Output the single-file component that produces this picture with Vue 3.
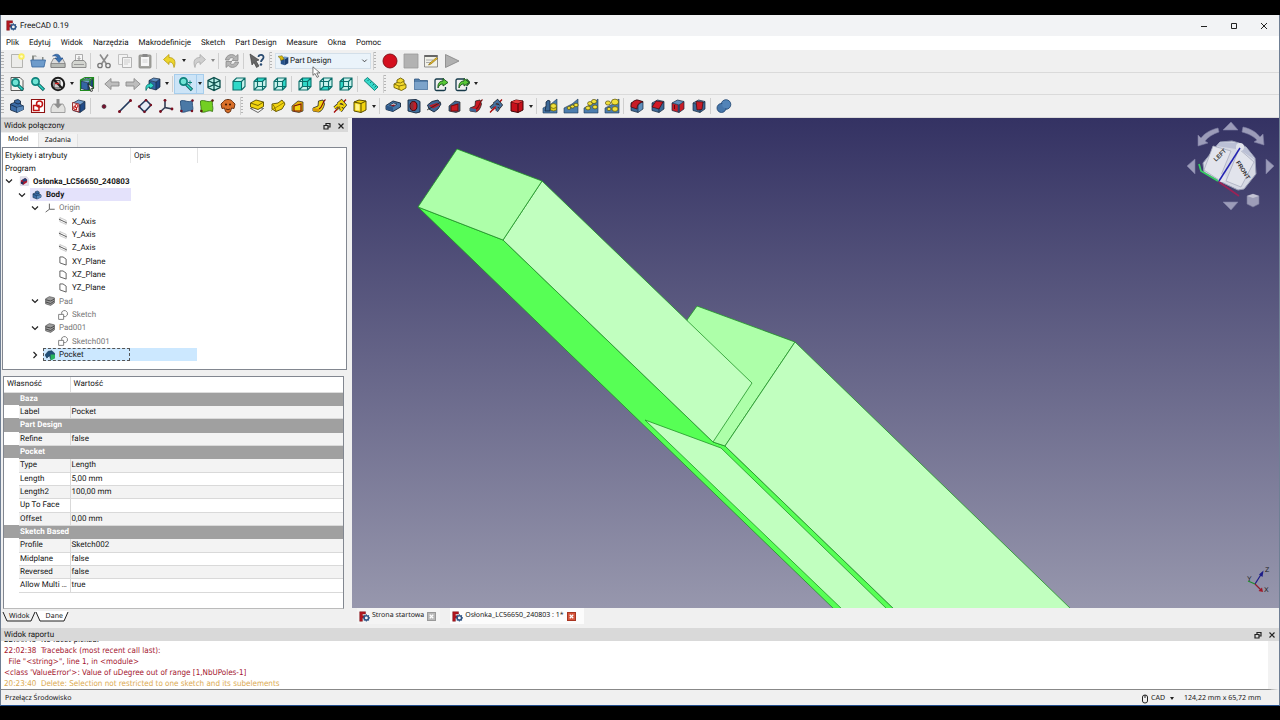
<script setup>
import { ref } from 'vue'

const svgBox = (front, top, side) =>
  `<path d="M2 5 L9 7 V14.5 L2 12.5Z" fill="${front}"/><path d="M2 5 L7.5 2 L14 3.5 L9 7Z" fill="${top}"/><path d="M9 7 L14 3.5 V11 L9 14.5Z" fill="${side}"/><path d="M2 5 L7.5 2 L14 3.5 V11 L9 14.5 L2 12.5Z M2 5 L9 7 L14 3.5 M9 7 V14.5" fill="none" stroke="#14263c" stroke-width=".7"/>`
const wire = (fill, inner = true) =>
  `<path d="M2 5.5 L5.5 2 H14 V10.5 L10.5 14 H2Z" fill="#c9f3ee"/><path d="${fill}" fill="#2fd8c8"/><path d="M2 5.5 H10.5 V14 H2Z M2 5.5 L5.5 2 H14 V10.5 L10.5 14 M10.5 5.5 L14 2${inner ? ' M5.5 2 V10.5 H14 M5.5 10.5 L2 14' : ''}" fill="none" stroke="#0c6f6b" stroke-width="1.1"/>`
const blueBox = svgBox('#3465a4', '#729fcf', '#204a87')
const pattern = (shapes) =>
  `<path d="M1 15 V10 L9 6 L15 1 V15Z" fill="#4c7dae" stroke="#1c3553" stroke-width=".6"/>${shapes}`
const knob = (x, y, r = 2.5) =>
  `<ellipse cx="${x}" cy="${y}" rx="${r}" ry="${r * 0.8}" fill="#f1e03a" stroke="#57500a" stroke-width=".7"/>`
const loft = (c, d) =>
  `<path d="M2 8 L8 3 L13 4 V13 L9 14.5 L2 13Z" fill="${d}" stroke="#222" stroke-width=".7"/><path d="M4 8 L11 6 V13 H4Z" fill="${c}" stroke="#7a0c0c" stroke-width="1.1"/>`
const pipe = (c, d) =>
  `<path d="M2 10 L7 8 L7.500 3 L12 2 L13.500 6 C12.500 10 11 13 8 14 L2 13Z" fill="${c}" stroke="#222" stroke-width=".8"/><path d="M2 10 L8 11 V14 L2 13Z" fill="${d}"/><path d="M8 11 C12 9 11 4 14.500 1.500" fill="none" stroke="#7a0c0c" stroke-width="1.1"/>`
const helix = (c, d) =>
  `<path d="M2 14.500 L14 1.500" stroke="#a40000" stroke-width="1.200"/><path d="M2.500 10 L6 7 L10 11 L8.500 13 M6 6 L9.500 3 L13 7 L11 9.500 M6 7 L11 8" fill="none" stroke="#222" stroke-width="3.200"/><path d="M2.500 10 L6 7 L10 11 L8.500 13 M6 6 L9.500 3 L13 7 L11 9.500 M6 7 L11 8" fill="none" stroke="${c}" stroke-width="2"/><path d="M5 12 L8 8.500" stroke="${d}" stroke-width="1.300"/>`
const exportIcon = (x) =>
  `<path d="M11 3 H3.5 Q2 3 2 4.500 V13 Q2 14.500 3.500 14.500 H11 Q12.500 14.500 12.500 13 V11" fill="none" stroke="#163a4a" stroke-width="1.3"/><path d="M5 12 C4.500 7 7 5 10 5 V2.500 L15 6.500 L10 10 V8 C7.500 8 6 9 5 12Z" fill="#58c837" stroke="#17551a" stroke-width=".9"/>${x}`
const magnifier = (x, y) =>
  `<circle cx="${x}" cy="${y}" r="3.6" fill="#6fe3d4" stroke="#0e837c" stroke-width="1.700"/><path d="M${x + 2.8} ${y + 2.8} L14 14" stroke="#0b5f5c" stroke-width="3.2"/><path d="M${x + 3.2} ${y + 3.2} L13.500 13.500" stroke="#2fd8c8" stroke-width="1.500"/>`

const icons = {
  new: '<path d="M2.500 1.500 H13.500 V14.500 H2.500Z" fill="#ececea" stroke="#b4b4b0"/><circle cx="12.500" cy="3.500" r="3.200" fill="#f9ee5e"/><circle cx="12.500" cy="3.500" r="1.300" fill="#fffbd0"/>',
  open: '<path d="M2 13 V2.500 H6 L7 4 H13.500 V13Z" fill="#8a8d88"/><path d="M4 3.500 H12 V7 H4Z" fill="#e8e8e8"/><path d="M.8 7 H15.500 L14 14 H2Z" fill="#6d9bcb" stroke="#35659c" stroke-width=".8"/>',
  save: '<path d="M3.500 5.500 H12.500 L15 10 V14.500 H1 V10Z" fill="#dcdcdc" stroke="#777" stroke-width=".8"/><path d="M1 10.500 H15 V14.500 H1Z" fill="#b7bab5" stroke="#777" stroke-width=".7"/><path d="M2.500 3 C6 0 10 1 10.500 5 H13 L9 9.500 L5 5 H7.500 C7 3 5 2.500 2.500 3Z" fill="#3b73b2" stroke="#204a87" stroke-width=".6"/>',
  print: '<path d="M4.500 1.500 H11.500 V8 H4.500Z" fill="#f6f6f6" stroke="#999" stroke-width=".8"/><path d="M8 3 V6.500 M6.500 5 L8 6.500 L9.500 5" fill="none" stroke="#999"/><path d="M3 7.500 H13 L15 10 V14.500 H1 V10Z" fill="#d3d5d0" stroke="#858585" stroke-width=".9"/><path d="M3 11.500 H13" stroke="#999"/>',
  cut: '<path d="M4 1.500 L10.500 11 M12 1.500 L5.500 11" stroke="#8b8b8b" stroke-width="1.600"/><circle cx="4" cy="12.500" r="2.200" fill="none" stroke="#777" stroke-width="1.300"/><circle cx="12" cy="12.500" r="2.200" fill="none" stroke="#777" stroke-width="1.300"/>',
  copy: '<path d="M1.500 1.500 H10.500 V11.500 H1.500Z" fill="#f3f3f3" stroke="#c2c2c2"/><path d="M5.500 4.500 H14.500 V14.500 H5.500Z" fill="#f4f4f4" stroke="#b3b3b3"/><path d="M7 7 H13 M7 9 H13 M7 11 H11" stroke="#c4c4c4" stroke-width=".8"/>',
  paste: '<rect x="2" y="2" width="12" height="13" rx="1" fill="#a4a4a0" stroke="#8a8a86" stroke-width=".8"/><path d="M4 4 H12 V13 H4Z" fill="#f7f7f7"/><path d="M5.500 1 H10.500 V4 H5.500Z" fill="#888"/><path d="M5.500 7 H10.500 M5.500 9 H10.500" stroke="#ccc" stroke-width=".8"/>',
  undo: '<path d="M1.500 6.500 L7 1.500 V4.500 C12 4.500 14.500 8 12 14.500 C11.500 10.500 10 9 7 9 V11.500Z" fill="#ecd52c" stroke="#b79b10" stroke-width=".8"/>',
  redo: '<path d="M14.500 6.500 L9 1.500 V4.500 C4 4.500 1.500 8 4 14.500 C4.500 10.500 6 9 9 9 V11.500Z" fill="#cfcfcf" stroke="#a9a9a9" stroke-width=".8"/>',
  refresh: '<path d="M1.500 7 C2 1.500 9 0 11.800 3.500 L14 1.500 V7.500 H8 L9.800 5.700 C8 4 5.500 4.500 5 7Z M14.500 9 C14 14.500 7 16 4.200 12.500 L2 14.500 V8.500 H8 L6.200 10.300 C8 12 10.500 11.500 11 9Z" fill="#b4b4b4" stroke="#888" stroke-width=".8"/>',
  whats: '<path d="M1 1 L10 7 L7 8 L10 13 L7.500 14.500 L5 9.500 L3 12Z" fill="#666" stroke="#333" stroke-width=".6"/><path d="M9.500 4 C9.500 1 15 1 14.500 4.500 C14.500 6.500 12 6.500 12 9" fill="none" stroke="#284a70" stroke-width="1.800"/><circle cx="12" cy="11.500" r="1.200" fill="#284a70"/>',
  record: '<circle cx="8" cy="8" r="7" fill="#d40f1e" stroke="#7c0a12" stroke-width=".9"/>',
  stop: '<path d="M1 1 H15 V15 H1Z" fill="#b2b2b2" stroke="#9a9a9a" stroke-width=".8"/>',
  macro: '<path d="M1.500 2.500 H14.500 V14 H1.500Z" fill="#f1f1e8" stroke="#777" stroke-width=".8"/><path d="M1.500 2 H14.500 V4 H1.500Z" fill="#666"/><path d="M3 7 H10 M3 9.500 H9" stroke="#9a9a9a" stroke-width=".8"/><path d="M14.500 5.500 L8 11 L5.500 12 L7 10 L13.500 4.500Z" fill="#efc32c" stroke="#7a5b00" stroke-width=".6"/>',
  play: '<path d="M1.500 1.500 L15 8 L1.500 14.500Z" fill="#b0b0b0" stroke="#8b8b8b" stroke-width=".9"/>',
  fitAll: '<path d="M2 1.500 H11 L14 4.500 V14.500 H2Z" fill="#f4f4f0" stroke="#333" stroke-width=".8"/>' + magnifier(6.5, 6.5),
  fitSel: magnifier(5.5, 5.5),
  drawStyle: '<path d="M4 4.500 H10 V12 H4Z" fill="#cfcfcf" stroke="#444"/><circle cx="8" cy="8" r="6.200" fill="none" stroke="#1c1c1c" stroke-width="2"/><path d="M4 4 L12 12" stroke="#1c1c1c" stroke-width="2"/><path d="M5 7.500 H9" stroke="#cc1f1f" stroke-width="1.500"/>',
  bbox: blueBox + '<path d="M1.500 4 L6 1.500 H14.500 V12 L11 14.500 H1.500Z M1.500 4 H11 V14.500 M11 4 L14.500 1.500" fill="none" stroke="#1f8a1f" stroke-width="1.200"/><path d="M9 8 L15 12 L12.500 12.300 L13.500 15 L11.800 15.500 L11 13Z" fill="#fff" stroke="#111" stroke-width=".7"/>',
  back: '<path d="M.8 8 L7 2.500 V6 H15 V10 H7 V13.500Z" fill="#bdbdbd" stroke="#8b8b8b" stroke-width=".9"/>',
  forward: '<path d="M15.200 8 L9 2.500 V6 H1 V10 H9 V13.500Z" fill="#bdbdbd" stroke="#8b8b8b" stroke-width=".9"/>',
  goLink: '<path d="M4 4.500 L11 6 V14 L4 12Z" fill="#3465a4"/><path d="M4 4.500 L8.500 2 L15 3 L11 6Z" fill="#5d8cc0"/><path d="M11 6 L15 3 V11 L11 14Z" fill="#204a87"/><path d="M4 4.500 L8.500 2 L15 3 V11 L11 14 L4 12Z M4 4.500 L11 6 L15 3 M11 6 V14" fill="none" stroke="#14263c" stroke-width=".7"/><path d="M1 14.500 C0 9 3 8 5 8 V6 L9 9.500 L5 13 V11 C3 11 2 12 1 14.500Z" fill="#2fd8c8" stroke="#0b5f5c" stroke-width=".7"/>',
  zoomTool: magnifier(5.5, 5.5) + '<path d="M12 4.500 V8.500 M10 6.500 H14" stroke="#0e837c" stroke-width="1"/>',
  iso: '<path d="M8 1.500 L14 4.500 V11.500 L8 14.500 L2 11.500 V4.500Z" fill="#b9efe8"/><path d="M8 1.500 L14 4.500 V11.500 L8 14.500 L2 11.500 V4.500Z M2 4.500 L8 7.500 L14 4.500 M8 7.500 V14.500 M8 1.500 V8 M2 11.500 L8 8.500 L14 11.500" fill="none" stroke="#0b4f4c" stroke-width="1.300"/>',
  front: wire('M2 5.5 H10.5 V14 H2Z', false),
  top: wire('M2 5.5 L5.5 2 H14 L10.500 5.500Z'),
  right: wire('M10.5 5.5 L14 2 V10.500 L10.500 14Z'),
  rear: wire('M5.5 2 H14 V10.500 H5.500Z'),
  bottom: wire('M2 14 L5.500 10.500 H14 L10.500 14Z'),
  left: wire('M2 5.500 L5.500 2 V10.500 L2 14Z'),
  measure: '<path d="M1 4.500 L4.500 1.500 L15 11 L11.500 14.500Z" fill="#35d9ca" stroke="#0b7a74" stroke-width=".9"/><path d="M6 3.500 L4.500 5 M8.500 5.500 L7 7 M11 8 L9.500 9.500 M13 10 L11.500 11.500" stroke="#0b5f5c" stroke-width=".8"/>',
  part: '<path d="M2 8 L5 6.500 V4 L8.500 2 L12 4 V7 L14 8.500 V12 L9.500 14.500 L2 11.500Z" fill="#f3d92c" stroke="#6b5c04" stroke-width=".9"/><path d="M2 8 L7 10 L14 8.500 M7 10 V13.500 M5 6.500 L8.500 7 L12 5" fill="none" stroke="#7d6c07" stroke-width=".9"/>',
  group: '<path d="M1.500 3 H6 L7 4.500 H14.500 V13.500 H1.500Z" fill="#5580ac" stroke="#305780" stroke-width=".8"/><path d="M1.500 6 H14.500 V13.500 H1.500Z" fill="#7ca3ca"/>',
  link: exportIcon(''),
  links: exportIcon('<path d="M12.500 3 L16 6.500 L12.500 10" fill="none" stroke="#17551a" stroke-width="1.200"/>'),
  body: '<path d="M1.500 6 L5.500 4.500 V2.500 L9 1.500 L11.500 3 V6.500 L14.500 8 V11.500 L8 14.500 L1.500 12Z" fill="#3c6ca6" stroke="#14263c" stroke-width=".8"/><path d="M1.500 6.500 L8 9.500 L14.500 8 M8 9.500 V14.500 M5.500 4.500 L9 6 L11.500 5" fill="none" stroke="#162c4a" stroke-width=".9"/><path d="M8 9.500 L14.500 8 V11.500 L8 14.500Z" fill="#5886b8"/>',
  sketch: '<path d="M1.500 1.500 H14.500 V14.500 H1.500Z" fill="#fff" stroke="#8e1111" stroke-width="1.100"/><path d="M3.500 7.500 H9 V12.500 H3.500Z" fill="none" stroke="#c11515" stroke-width="1.500"/><circle cx="9.500" cy="6" r="3" fill="none" stroke="#c11515" stroke-width="1.500"/>',
  editSketch: '<path d="M3 6 H13 L15 10 V14.500 H1 V10Z" fill="#e2e2e0" stroke="#989898" stroke-width=".9"/><path d="M6.500 1 H9.500 V6 H12 L8 10.500 L4 6 H6.500Z" fill="#8e8e8e"/>',
  mapSketch: blueBox + '<path d="M1.500 4.500 L8 6 V14 L1.500 12Z" fill="#f7e5e5" stroke="#8e1111" stroke-width=".8"/><circle cx="5.500" cy="8" r="1.500" fill="none" stroke="#c11515"/><path d="M2.800 8.500 L5.500 9.500 V12 L2.800 11Z" fill="none" stroke="#c11515"/>',
  point: '<circle cx="8" cy="8.500" r="2" fill="#7a1030" stroke="#333" stroke-width=".6"/>',
  line: '<path d="M2 14 L14 2" stroke="#223a5c" stroke-width="1.700"/><circle cx="2.500" cy="13.500" r="1.500" fill="#7a1020"/><circle cx="13.500" cy="2.500" r="1.500" fill="#7a1020"/>',
  plane: '<path d="M9 2 L14 7 L7.500 14 L2 8.500Z" fill="#e4edf6" stroke="#223a5c" stroke-width="1.600"/><circle cx="9" cy="2.200" r="1.300" fill="#7a1020"/><circle cx="13.800" cy="7" r="1.300" fill="#7a1020"/><circle cx="7.500" cy="13.800" r="1.300" fill="#7a1020"/><circle cx="2.200" cy="8.500" r="1.300" fill="#7a1020"/>',
  axes: '<path d="M7 2 V9.500 L14.500 11 M7 9.500 L2 14" fill="none" stroke="#333f55" stroke-width="1.600"/><circle cx="7" cy="2.300" r="1.400" fill="#7a1020"/><circle cx="14" cy="11" r="1.400" fill="#7a1020"/><circle cx="2.500" cy="13.500" r="1.400" fill="#7a1020"/>',
  binder: '<path d="M1.500 3 C6 1 9 6 14 2 C12 6 15 9 13.500 13.500 C9 11 6 16 1.500 13.500 C3 10 1 7 1.500 3Z" fill="#4b79a6" stroke="#1d426e" stroke-width=".8"/><circle cx="13.500" cy="2.500" r="1.200" fill="#7a1020"/><circle cx="2.500" cy="13" r="1.200" fill="#7a1020"/><circle cx="13" cy="13" r="1.200" fill="#7a1020"/>',
  subBinder: '<path d="M1.500 3 C6 1 9 6 14 2 C12 6 15 9 13.500 13.500 C9 11 6 16 1.500 13.500 C3 10 1 7 1.500 3Z" fill="#73cf22" stroke="#2f6d0a" stroke-width=".8"/><circle cx="13.500" cy="2.500" r="1.200" fill="#5c1a10"/><circle cx="2.500" cy="13" r="1.200" fill="#5c1a10"/>',
  clone: '<path d="M3.500 3.500 C5 .8 11 .8 12.500 3.500 L15 6 L14 10.500 L11.500 10 L10.500 13.500 L8 15 L5.500 13.500 L4.500 10 L2 10.500 L1 6Z" fill="#d9702a" stroke="#5b2608" stroke-width=".9"/><circle cx="6" cy="6.500" r="1" fill="#3a1604"/><circle cx="10" cy="6.500" r="1" fill="#3a1604"/><path d="M6 11 Q8 12.500 10 11" stroke="#5b2608" fill="#f3b27d"/>',
  pad: '<path d="M1.500 10.500 L7 8.500 L14.500 10.500 L9 14.500Z" fill="#f5f5f5" stroke="#444" stroke-width=".8"/><path d="M1.500 5 L7 2 L14.500 4 V8.500 L9 11.500 L1.500 9Z" fill="#f2d40f" stroke="#5a4d00" stroke-width=".9"/><path d="M1.500 5 L9 7.500 L14.500 4" fill="none" stroke="#5a4d00" stroke-width=".8"/>',
  revolve: '<path d="M2 6 L8 5 L12 2 L15 6 L12 11 L6 13.500 L2 11Z" fill="#f2d40f" stroke="#5a4d00" stroke-width=".9"/><path d="M1 12.500 L15 4" stroke="#8b7500" stroke-width=".8"/><path d="M2 6 C4 7 5 10 6 13.500" fill="none" stroke="#8b7500"/>',
  loft: loft('#f2d40f', '#e7b40f'), pipe: pipe('#f2d40f', '#d89c08'), helix: helix('#f2d40f', '#8f7200'),
  prim: '<path d="M2 4 L7 2 L14 3 V12 L9 14.500 L2 13Z" fill="#f2d40f" stroke="#5a4d00" stroke-width="1"/><path d="M2 4 L9 5.500 L14 3 M9 5.500 V14.500" fill="none" stroke="#5a4d00"/><path d="M3.500 5.800 L7.500 6.500 V12.500 L3.500 12Z" fill="#fff38a"/>',
  pocket: '<path d="M1 7.500 L8 3 L15.500 5 V9 L8 13.500 L1 11.500Z" fill="#4777a8" stroke="#14263c" stroke-width=".9"/><path d="M4.500 7.200 L8.500 5 L12 6 L8.500 8.500Z" fill="#d8dfe8" stroke="#14263c" stroke-width=".7"/><path d="M5.500 7.400 L8.500 6.500 L10.500 7 L8.500 8.500Z" fill="#8c1420"/><path d="M1 7.500 L8 9.500 V13.500 L1 11.500Z" fill="#2d5788"/>',
  hole: '<path d="M2 2 L10 1.500 L14 3.500 V14 L10 15 L2 13Z" fill="#40719f" stroke="#14263c" stroke-width=".9"/><ellipse cx="7.500" cy="8" rx="3.500" ry="4.500" fill="#c81c26" stroke="#41070b"/><path d="M7.500 4 A3 4 0 0 0 7.500 12Z" fill="#86303a"/>',
  groove: '<path d="M1.500 7 L6 3.500 L12 2 L15 6 L12 11 L8 14 L3 11Z" fill="#3d6594" stroke="#14263c" stroke-width=".9"/><path d="M3 7.500 L11 5 L14 7 L7 10.500Z" fill="#b91b28"/><path d="M1 12 L15 4" stroke="#222" stroke-width=".8"/>',
  cutLoft: loft('#c91a24', '#3d6594'), cutPipe: pipe('#c91a24', '#3d6594'), cutHelix: helix('#45709f', '#c91a24'),
  cutPrim: '<path d="M2 4 L7 2 L14 3 V12 L9 14.500 L2 13Z" fill="#c6101b" stroke="#3c0507" stroke-width="1"/><path d="M2 4 L9 5.500 L14 3 M9 5.500 V14.500" fill="none" stroke="#3c0507"/><path d="M2 4 L7 2 L14 3 L9 5.500Z" fill="#e43b3b"/>',
  mirror: pattern('<path d="M4 8 V4 Q6 1 8 3 V13 H3Z" fill="#3c6895" stroke="#14263c" stroke-width=".8"/><path d="M8.500 8 V12 Q11.500 14 14.500 12 V8" fill="#e3ce1c" stroke="#57500a" stroke-width=".6"/>' + knob(11.5, 8, 3)),
  linear: pattern(knob(6, 10, 1.8) + knob(9.5, 8.5, 2) + knob(13, 7, 2.2)),
  polar: pattern(knob(5, 10, 2.4) + knob(7, 5.5, 2.4) + knob(11, 3.5, 2.6) + knob(12, 9, 2.4)),
  multi: pattern(knob(4, 5, 2.6) + knob(11, 4, 3.6) + knob(11, 11, 3) + knob(5, 11, 2)),
  fillet: svgBox('#3c6895', '#c81c26', '#5f8fbd') + '<path d="M2 9 C2 4 5 2 9 2 L14 4 C10 4 8 7 8 11Z" fill="#c81c26" stroke="#41070b" stroke-width=".7"/>',
  chamfer: svgBox('#3c6895', '#5f8fbd', '#3c6895') + '<path d="M2 9 L6 3 L13 4 L9 11Z" fill="#d21a25" stroke="#41070b" stroke-width=".7"/>',
  draft: svgBox('#c81c26', '#5f8fbd', '#c81c26') + '<path d="M8.700 7 V14" stroke="#26486e" stroke-width="2"/><path d="M4.500 7 V11" stroke="#5c0b10"/>',
  thickness: svgBox('#3c6895', '#5f8fbd', '#3c6895') + '<path d="M5 3.500 L12 4 L11 11.500 L6 12Z" fill="#c81c26" stroke="#41070b" stroke-width=".7"/>',
  boolean: '<circle cx="10" cy="6.500" r="4.800" fill="#5284b8" stroke="#1d426e" stroke-width=".8"/><circle cx="5.500" cy="10" r="4.500" fill="#4676aa" stroke="#1d426e" stroke-width=".8"/><circle cx="10" cy="6.500" r="3.800" fill="#5284b8"/>',
  doc: '<path d="M2 1 H12 L15 4 V15 H2Z" fill="#e4e4ee" stroke="#b9b9c6" stroke-width=".6"/><path d="M3 7 L10 3 L13 6 V10 L7 14 L3 12Z" fill="#b3192c"/><path d="M5 6 L10 3 L13 6 L12 8 L7 9Z" fill="#25497e"/><path d="M3 9 L7 9 V14 L3 12Z" fill="#1c3460"/>',
  origin: '<path d="M7 1 V10 L15.500 10 M7 10 L1 14.500" fill="none" stroke="#666" stroke-width="1.600"/>',
  axis: '<path d="M3 2.500 L13 7 V13.500 L3 9Z" fill="none" stroke="#aaa" stroke-width="1"/><path d="M1.500 5 L14 11" stroke="#444" stroke-width="1.400"/>',
  planeItem: '<path d="M3 1.500 L8 1.500 L13 5 V14.500 L3 11Z" fill="#fff" stroke="#5c5c5c" stroke-width="1.500"/>',
  padItem: '<path d="M1 4.500 L7 1 L15 3 V11 L9 15 L1 12.500Z" fill="#9c9c9c" stroke="#444" stroke-width="1"/><path d="M1 6 L9 8 L15 5 M1 9.500 L9 12 L15 8" fill="none" stroke="#444" stroke-width="1.500"/>',
  sketchItem: '<path d="M1 7 H9 V15 H1Z" fill="none" stroke="#7d7d7d" stroke-width="1.500"/><path d="M6 7 V3 L9 1 H12 L15 4 V8 L12 10.500 H9" fill="none" stroke="#7d7d7d" stroke-width="1.500"/>',
  pocketItem: '<path d="M0 8 L5 2 L11 1 L16 6 V12 L9 15 L7 9 L3 13Z" fill="#1f4f78" stroke="#102c48" stroke-width=".8"/><path d="M9 7 L16 7 V13 L11 16 H9Z" fill="#27b45f"/>',
  logo: '<path d="M1 1 H9.500 V4.500 H5 V7 H8 V10 H5 V15 H1Z" fill="#b3161f" stroke="#6b0b10" stroke-width=".6"/><circle cx="10.700" cy="10" r="3.200" fill="none" stroke="#2f5587" stroke-width="2.200"/><path d="M10.700 4.800 V7 M10.700 13 V15.200 M5.500 10 H7.700 M13.700 10 H15.900 M7 6.300 L8.600 7.900 M14.400 6.300 L12.800 7.900 M7 13.700 L8.600 12.100 M14.400 13.700 L12.800 12.100" stroke="#2f5587" stroke-width="1.600"/>',
  partDesign: '<path d="M4 5 L10 6 V15 L4 13Z" fill="#25528a"/><path d="M4 5 L9 2 L15 3 L10 6Z" fill="#6b98cb"/><path d="M10 6 L15 3 V12 L10 15Z" fill="#1c3f70"/><path d="M0 2 L6 1 L9 6 L4 8 L3 5Z" fill="#d9bc12" stroke="#443c05" stroke-width=".6"/>',
}

const t = (i, name, o = {}) => ({ i, name, ...o })
const rows = [
  [
    { items: [t('new', 'Nowy'), t('open', 'Otwórz'), t('save', 'Zapisz'), t('print', 'Drukuj')] },
    { items: [t('cut', 'Wytnij'), t('copy', 'Kopiuj'), t('paste', 'Wklej')], sep: true },
    { items: [t('undo', 'Cofnij', { drop: true }), t('redo', 'Ponów', { drop: true, off: true })], sep: true },
    { items: [t('refresh', 'Odśwież')], sep: true },
    { items: [t('whats', 'Co to jest?')], sep: true },
    { combo: true, items: [], handle: true },
    { items: [t('record', 'Nagraj makro'), t('stop', 'Zatrzymaj'), t('macro', 'Makra'), t('play', 'Wykonaj makro')], handle: true },
  ],
  [
    { items: [t('fitAll', 'Dopasuj wszystko'), t('fitSel', 'Dopasuj zaznaczenie'), t('drawStyle', 'Styl', { drop: true }), t('bbox', 'Obwiednia')] },
    { items: [t('back', 'Wstecz'), t('forward', 'Dalej'), t('goLink', 'Przejdź', { drop: true })], sep: true },
    { items: [t('zoomTool', 'Powiększenie', { drop: true, on: true }), t('iso', 'Izometryczny')], sep: true },
    { items: [t('front', 'Przód'), t('top', 'Góra'), t('right', 'Prawo')], sep: true },
    { items: [t('rear', 'Tył'), t('bottom', 'Dół'), t('left', 'Lewo')], sep: true },
    { items: [t('measure', 'Zmierz')], sep: true },
    { items: [t('part', 'Część'), t('group', 'Grupa'), t('link', 'Łącze'), t('links', 'Łącza', { drop: true })], handle: true },
  ],
  [
    { items: [t('body', 'Zawartość'), t('sketch', 'Szkic'), t('editSketch', 'Edytuj szkic'), t('mapSketch', 'Mapuj szkic')] },
    { items: [t('point', 'Punkt'), t('line', 'Linia'), t('plane', 'Płaszczyzna'), t('axes', 'Układ'), t('binder', 'Łącznik'), t('subBinder', 'Łącznik podrzędny'), t('clone', 'Klon')], sep: true },
    { items: [t('pad', 'Wyciągnij'), t('revolve', 'Przekręć'), t('loft', 'Wyciągnięcie'), t('pipe', 'Rura'), t('helix', 'Helisa'), t('prim', 'Bryła', { drop: true })], handle: true },
    { items: [t('pocket', 'Kieszeń'), t('hole', 'Otwór'), t('groove', 'Rowek'), t('cutLoft', 'Wycięcie'), t('cutPipe', 'Wycięcie rurą'), t('cutHelix', 'Wycięcie helisą'), t('cutPrim', 'Wycięcie bryłą', { drop: true })], sep: true },
    { items: [t('mirror', 'Odbicie'), t('linear', 'Szyk liniowy'), t('polar', 'Szyk kołowy'), t('multi', 'Szyk wielokrotny')], sep: true },
    { items: [t('fillet', 'Zaokrąglenie'), t('chamfer', 'Faza'), t('draft', 'Pochylenie'), t('thickness', 'Grubość')], sep: true },
    { items: [t('boolean', 'Operacja logiczna')], sep: true },
  ],
]

const menus = ['Plik', 'Edytuj', 'Widok', 'Narzędzia', 'Makrodefinicje', 'Sketch', 'Part Design', 'Measure', 'Okna', 'Pomoc']

const tree = [
  { l: 1, i: 'doc', text: 'Osłonka_LC56650_240803', open: true, cls: 'bold' },
  { l: 2, i: 'body', text: 'Body', open: true, cls: 'bold active' },
  { l: 3, i: 'origin', text: 'Origin', open: true, cls: 'dim' },
  { l: 4, i: 'axis', text: 'X_Axis' },
  { l: 4, i: 'axis', text: 'Y_Axis' },
  { l: 4, i: 'axis', text: 'Z_Axis' },
  { l: 4, i: 'planeItem', text: 'XY_Plane' },
  { l: 4, i: 'planeItem', text: 'XZ_Plane' },
  { l: 4, i: 'planeItem', text: 'YZ_Plane' },
  { l: 3, i: 'padItem', text: 'Pad', open: true, cls: 'dim' },
  { l: 4, i: 'sketchItem', text: 'Sketch', cls: 'dim' },
  { l: 3, i: 'padItem', text: 'Pad001', open: true, cls: 'dim' },
  { l: 4, i: 'sketchItem', text: 'Sketch001', cls: 'dim' },
  { l: 3, i: 'pocketItem', text: 'Pocket', open: false, cls: 'picked' },
]

const props = [
  { g: 'Baza' }, { k: 'Label', v: 'Pocket', s: 1 },
  { g: 'Part Design' }, { k: 'Refine', v: 'false', s: 1 },
  { g: 'Pocket' }, { k: 'Type', v: 'Length', s: 1 }, { k: 'Length', v: '5,00 mm' },
  { k: 'Length2', v: '100,00 mm', s: 1 }, { k: 'Up To Face', v: '' }, { k: 'Offset', v: '0,00 mm', s: 1 },
  { g: 'Sketch Based' }, { k: 'Profile', v: 'Sketch002', s: 1 }, { k: 'Midplane', v: 'false' },
  { k: 'Reversed', v: 'false', s: 1 }, { k: 'Allow Multi …', v: 'true' },
]

const workbench = ref('Part Design')
</script>

<template>
  <div class="screen">
    <div class="window">
      <header class="title">
        <svg class="logo" viewBox="0 0 16 16" v-html="icons.logo"></svg>
        <span>FreeCAD 0.19</span>
        <div class="winbtns">
          <button aria-label="Minimalizuj"><svg viewBox="0 0 8 8"><path d="M1 4.500 H7" /></svg></button>
          <button aria-label="Maksymalizuj"><svg viewBox="0 0 8 8"><path d="M1.500 1.500 H6.500 V6.500 H1.500Z" /></svg></button>
          <button aria-label="Zamknij"><svg viewBox="0 0 8 8"><path d="M1 1 L7 7 M7 1 L1 7" /></svg></button>
        </div>
      </header>
      <nav class="menu"><button v-for="m in menus" :key="m">{{ m }}</button></nav>

      <div class="toolbars">
        <div v-for="(row, r) in rows" :key="r" class="row">
          <i class="handle first"></i>
          <template v-for="(g, n) in row" :key="n">
            <i v-if="g.sep" class="sep"></i>
            <i v-if="g.handle" class="handle"></i>
            <label v-if="g.combo" class="combo">
              <svg viewBox="0 0 16 16" v-html="icons.partDesign"></svg>
              <select v-model="workbench" aria-label="Środowisko pracy"><option>Part Design</option></select>
              <svg class="chev" viewBox="0 0 8 8"><path d="M1.500 3 L4 5.500 L6.500 3" /></svg>
            </label>
            <div v-else class="group">
              <span v-for="b in g.items" :key="b.i" class="tool" :class="{ on: b.on }">
                <button class="tb" :aria-label="b.name"><svg viewBox="0 0 16 16" v-html="icons[b.i]"></svg></button>
                <button v-if="b.drop" class="dd" :class="{ off: b.off }" :aria-label="b.name + ' – menu'"></button>
              </span>
            </div>
          </template>
        </div>
        <svg class="cursor" viewBox="0 0 12 16"><path d="M1 1 V11.500 L3.600 9.200 L6 14 L8 13 L5.700 8.500 H9.500Z" fill="#fff" stroke="#333" stroke-width=".8" /></svg>
      </div>

      <main class="work">
        <section class="dock">
          <h2 class="dockbar">
            Widok połączony
            <span class="dockbtns">
              <button aria-label="Odepnij"><svg viewBox="0 0 8 8"><path d="M3 3 V1.500 H7 V5 H5.500 M1 3.500 H5 V7 H1Z" /></svg></button>
              <button aria-label="Zamknij panel"><svg viewBox="0 0 8 8"><path d="M1.500 1.500 L6.500 6.500 M6.500 1.500 L1.500 6.500" /></svg></button>
            </span>
          </h2>
          <div class="tabs"><button class="cur">Model</button><button>Zadania</button></div>
          <div class="tree">
            <div class="treehead"><span>Etykiety i atrybuty</span><span>Opis</span></div>
            <div class="node root">Program</div>
            <div v-for="(n, k) in tree" :key="k" class="node" :class="['l' + n.l, n.cls]">
              <svg class="tw" viewBox="0 0 8 8">
                <path v-if="n.open === true" d="M1 2.500 L4 5.500 L7 2.500" />
                <path v-else-if="n.open === false" class="closed" d="M2.500 1 L5.500 4 L2.500 7" />
              </svg>
              <span class="label"><svg viewBox="0 0 16 16" v-html="icons[n.i]"></svg><span>{{ n.text }}</span></span>
            </div>
          </div>
          <div class="propbox">
            <table>
              <colgroup><col class="cgut" /><col class="ckey" /><col /></colgroup>
              <thead><tr><th colspan="2">Własność</th><th>Wartość</th></tr></thead>
              <tbody>
                <tr v-for="(p, k) in props" :key="k" :class="{ cat: p.g, shade: p.s }">
                  <td class="gut"></td>
                  <td v-if="p.g" colspan="2">{{ p.g }}</td>
                  <template v-else><td class="key">{{ p.k }}</td><td class="val">{{ p.v }}</td></template>
                </tr>
              </tbody>
            </table>
          </div>
          <div class="btabs">
            <svg viewBox="0 0 72 12" aria-hidden="true"><path d="M34 0 L38 10 H62 L66 0" fill="#fff" /><path d="M1 1 L5 10 H29 L33 1 M34 1 L38 10 H62 L66 1" fill="none" stroke="#222" stroke-width="1" /></svg>
            <button>Widok</button><button>Dane</button>
          </div>
        </section>

        <section class="mdi">
          <svg class="view" viewBox="352 118 927 490" preserveAspectRatio="xMinYMin slice">
            <defs>
              <linearGradient id="sky" x1="0" y1="0" x2="0" y2="1"><stop offset="0" stop-color="#343263" /><stop offset="1" stop-color="#9797ad" /></linearGradient>
            </defs>
            <path d="M352 118 H2400 V608 H352Z" fill="url(#sky)" />
            <g stroke="#1f9426" stroke-width=".8" stroke-linejoin="round">
              <path d="M418 207 L503 240 L713 442 L725 446 L895 610 H835 Z" fill="#57ff55" />
              <path d="M697 306 L795 342 L725 446 L713 442 L687 320Z" fill="#adffa9" />
              <path d="M795 342 L1072 610 H895 L725 446Z" fill="#c1ffbf" />
              <path d="M645 420 L721 448 L888 610 H843Z" fill="#c1ffbf" />
              <path d="M542 181 L752 383 L713 442 L503 240Z" fill="#c1ffbf" />
              <path d="M457 149 L542 181 L503 240 L418 207Z" fill="#adffa9" />
            </g>
            <g fill="#9c9cb9" stroke="#7d7da3" stroke-width=".6">
              <path d="M1231 122 L1238 130 H1223Z" /><path d="M1231 210 L1238 202 H1223Z" />
              <path d="M1187 166 L1195 159 V174Z" /><path d="M1274 166 L1266 159 V174Z" />
              <path d="M1218 128 C1210 130 1205 133 1201 138 L1198 135 L1198 146 L1208 143 L1205 141 C1208 137 1213 134 1219 132Z" />
              <path d="M1243 127 C1252 129 1257 133 1260 137 L1263 134 L1264 145 L1254 142 L1257 140 C1253 136 1249 134 1242 132Z" />
            </g>
            <path d="M1220 142 L1232 141 L1239 143 L1246 147 L1255 158 L1256 174 L1244 189 L1238 190 L1219 181 L1204 172 L1203 163Z" fill="#d6d9e4" stroke="#979cb4" />
            <path d="M1213 146 L1231 151 L1219 180 L1204 170Z M1239 149 L1254 162 L1241 187 L1226 181Z" fill="#e2e4ec" stroke="#a9adbf" stroke-width=".8" />
            <path d="M1220 142 L1239 143 L1236 149 L1216 146Z M1239 149 L1246 147 L1255 160Z" fill="#bbc0d5" />
            <circle cx="1222" cy="178" r="4" fill="#e2e4ec" /><circle cx="1240" cy="147" r="4" fill="#e2e4ec" />
            <path d="M1240 148 L1219 181" stroke="#2323b2" stroke-width="1.500" />
            <path d="M1218 181 L1201 171 L1199 164" fill="none" stroke="#36cf62" stroke-width="1.700" />
            <path d="M1219 182 L1239 196" stroke="#9c2255" stroke-width="1.700" />
            <text x="1220" y="157" class="cube" transform="rotate(-45 1220 155)" text-anchor="middle">LEFT</text>
            <text x="1243" y="172" class="cube" transform="rotate(57 1243 170)" text-anchor="middle">FRONT</text>
            <path d="M1247 196 L1253 194 L1259 196 V204 L1253 207 L1247 204Z" fill="#9d9db8" stroke="#777799" stroke-width=".6" /><path d="M1247 196 L1253 198 L1259 196 L1253 194Z" fill="#c4c4d4" />
            <path d="M1255 584 L1262 573" stroke="#1d1d88" stroke-width="1.300" /><path d="M1263.500 570.500 L1259 574.500 L1262.500 577Z" fill="#1d1d88" />
            <path d="M1255 584 L1248 581" stroke="#1c8f2c" stroke-width="1.300" />
            <path d="M1255 584 L1261 590" stroke="#8f1c2c" stroke-width="1.300" /><path d="M1263 592 L1262 587.500 L1258.500 591Z" fill="#a01828" />
            <text x="1265" y="572" class="ax">Z</text><text x="1247" y="581" class="ax">Y</text><text x="1264" y="592" class="ax">X</text>
          </svg>
          <div class="mditabs">
            <div class="mtab"><svg viewBox="0 0 16 16" v-html="icons.logo"></svg><span>Strona startowa</span><button class="x" aria-label="Zamknij kartę"><svg viewBox="0 0 8 8"><path d="M2 2 L6 6 M6 2 L2 6" /></svg></button></div>
            <div class="mtab cur"><svg viewBox="0 0 16 16" v-html="icons.logo"></svg><span>Osłonka_LC56650_240803 : 1*</span><button class="x red" aria-label="Zamknij kartę"><svg viewBox="0 0 8 8"><path d="M2 2 L6 6 M6 2 L2 6" /></svg></button></div>
          </div>
        </section>
      </main>

      <section class="report">
        <h2 class="dockbar">
          Widok raportu
          <span class="dockbtns">
            <button aria-label="Odepnij raport"><svg viewBox="0 0 8 8"><path d="M3 3 V1.500 H7 V5 H5.500 M1 3.500 H5 V7 H1Z" /></svg></button>
            <button aria-label="Zamknij raport"><svg viewBox="0 0 8 8"><path d="M1.500 1.500 L6.500 6.500 M6.500 1.500 L1.500 6.500" /></svg></button>
          </span>
        </h2>
        <div class="log">
          <pre><span class="k">22:00:45  No facet picked.</span>
<span class="e">22:02:38  Traceback (most recent call last):
  File "&lt;string&gt;", line 1, in &lt;module&gt;
&lt;class 'ValueError'&gt;: Value of uDegree out of range [1,NbUPoles-1]</span>
<span class="w">20:23:40  Delete: Selection not restricted to one sketch and its subelements</span></pre>
          <i class="thumb"></i>
        </div>
      </section>

      <footer class="status">
        <span>Przełącz Środowisko</span>
        <button class="navmode"><svg viewBox="0 0 8 10"><path d="M1.500 3 Q1.500 1 4 1 Q6.500 1 6.500 3 V7 Q6.500 9 4 9 Q1.500 9 1.500 7Z M4 1 V4" /></svg>CAD<i class="tri"></i></button>
        <span class="coords">124,22 mm x 65,72 mm</span>
      </footer>
    </div>
  </div>
</template>

<style>
html, body { margin: 0; background: #000; }
</style>

<style scoped>
.screen { box-sizing: border-box; height: 100vh; padding: 15px 0 14px; background: #000; font-family: Roboto, "Noto Sans", sans-serif; font-size: 8px; line-height: 12px; color: #161616; overflow: hidden; text-rendering: geometricPrecision; }
.window { box-sizing: border-box; height: 100%; display: flex; flex-direction: column; background: #f0f0f0; border: 1px solid #6f7f94; border-top: 0; border-bottom-color: #234f8e; overflow: hidden; }
button { margin: 0; padding: 0; border: 0; background: none; font: inherit; color: inherit; flex: none; text-rendering: inherit; }
svg { display: block; flex: none; }
.title { height: 21px; flex: none; display: flex; align-items: center; padding-left: 5px; background: #f2f3f5; }
.title .logo { width: 11px; height: 11px; margin-right: 3px; }
.winbtns { margin-left: auto; display: flex; }
.winbtns button { width: 30px; height: 20px; display: grid; place-items: center; }
.winbtns svg { width: 8px; height: 8px; fill: none; stroke: #222; stroke-width: 1; }
.menu { height: 14px; flex: none; display: flex; gap: 10px; padding-left: 5px; background: #fff; }
.menu button { line-height: 14px; }
.toolbars { position: relative; flex: none; height: 68px; display: flex; flex-direction: column; }
.row { flex: 1; display: flex; align-items: center; border-bottom: 1px solid #dadada; }
.group { display: flex; }
.tool { display: flex; }
.tool.on { background: #cce4f7; box-shadow: 0 0 0 1px #a6cdec; }
.tool.on .dd { border-left: 1px solid #a6cdec; width: 7px; }
.tb { width: 21px; height: 18px; display: grid; place-items: center; }
.tool:nth-child(3n) .tb { width: 20px; }
.tb svg { width: 16px; height: 16px; }
.dd { width: 8px; height: 18px; display: grid; place-items: center; }
.dd::after, .tri { content: ""; border: 2px solid transparent; border-top: 3px solid #222; border-bottom: 0; }
.dd.off::after { border-top-color: #888; }
.sep { flex: none; width: 1px; height: 16px; margin: 0 2px 0 1px; background: #cfcfcf; }
.handle { flex: none; width: 2px; height: 18px; margin: 0 3px 0 2px; border-left: 1px solid #d0d0d0; background: repeating-linear-gradient(#b5b5b5 0 1px, transparent 1px 3px); }
.handle.first { margin: 0 2px 0 0; border-left-color: transparent; }
.combo { width: 96px; height: 16px; box-sizing: border-box; display: flex; align-items: center; padding: 0 2px; background: #eaf3fa; border: 1px solid #d3dfe9; }
.combo svg { width: 11px; height: 11px; }
.combo select { appearance: none; flex: 1; min-width: 0; border: 0; background: none; font: inherit; color: inherit; padding: 0 1px; outline: 0; text-rendering: inherit; }
.combo .chev { width: 7px; height: 7px; fill: none; stroke: #333; }
.cursor { position: absolute; left: 311px; top: 16px; width: 10px; height: 13px; }
.work { flex: 1; min-height: 0; display: flex; }
.dock { width: 347px; flex: none; display: flex; flex-direction: column; border-top: 1px solid #c9c9c9; margin-right: 4px; }
.dockbar { margin: 0; height: 13px; flex: none; display: flex; align-items: center; padding: 0 3px; background: #d9d9d9; font-size: 8px; font-weight: 400; line-height: 13px; }
.dockbtns { margin-left: auto; display: flex; gap: 6px; }
.dockbtns svg { width: 8px; height: 8px; fill: none; stroke: #222; stroke-width: 1.2; }
.tabs { height: 15px; flex: none; display: flex; align-items: flex-end; }
.tabs button { height: 13px; padding: 0 6px; background: #f3f3f3; border-right: 1px solid #e2e2e2; }
.tabs .cur { height: 14px; background: #fff; padding: 0 9px 0 7px; }
.tabs, .btabs, .mditabs, .status { font-family: "Noto Sans", sans-serif; font-size: 7px; }
.tree { height: 223px; box-sizing: border-box; flex: none; margin: 0 1px; background: #fff; border: 1px solid #828790; overflow: hidden; }
.treehead { display: flex; height: 15px; line-height: 15px; }
.treehead span { box-sizing: border-box; width: 67px; padding-left: 3px; border-right: 1px solid #e3e3e3; }
.treehead span:first-child { width: 128px; padding-left: 2px; }
.node { height: 13px; line-height: 13px; display: flex; align-items: center; }
.node:nth-child(3n) { height: 14px; }
.node.root { padding-left: 2px; height: 11px; line-height: 11px; }
.l1 { padding-left: 2px; }
.l2 { padding-left: 15px; }
.l3 { padding-left: 28px; }
.l4 { padding-left: 41px; }
.tw { width: 8px; height: 8px; margin-right: 4px; fill: none; stroke: #222; stroke-width: 1.2; }
.label { box-sizing: border-box; flex: none; height: 100%; padding-left: 2px; display: flex; align-items: center; gap: 4px; }
.label svg { width: 10px; height: 10px; }
.bold { font-weight: 700; }
.dim { color: #777; }
.active .label { width: 101px; background: #e4e2fb; }
.picked { background: linear-gradient(#cce8ff, #cce8ff) 40px 0 / 154px 100% no-repeat; }
.picked .label { width: 87px; border: 1px dashed #555; padding-left: 1px; }
.propbox { flex: 1; min-height: 0; margin: 6px 4px 0 2px; background: #fff; border: 1px solid #828790; border-bottom-color: #bbb; overflow: hidden; }
table { width: 100%; border-collapse: collapse; table-layout: fixed; }
.cgut { width: 15px; }
.ckey { width: 51px; }
th { font-weight: 400; text-align: left; height: 15px; padding: 0 3px; line-height: 14px; border-bottom: 1px solid #ddd; box-sizing: border-box; }
th:first-child { border-right: 1px solid #ddd; }
td { box-sizing: border-box; height: 13px; line-height: 12px; padding: 0 1px; border-bottom: 1px solid #d9d9d9; white-space: nowrap; overflow: hidden; }
tr:nth-child(3n) td { height: 14px; }
.gut { padding: 0; border-bottom: 0; }
.key { border-right: 1px solid #d9d9d9; }
.shade .key, .shade .val { background: #f3f3f3; }
.cat td { background: #a0a0a0; color: #fff; font-weight: 700; border-color: #a0a0a0; }
.btabs { position: relative; height: 19px; box-sizing: border-box; flex: none; display: flex; align-items: flex-start; padding: 1px 0 0 8px; gap: 16px; }
.btabs svg { position: absolute; left: 1px; top: 2px; width: 72px; height: 12px; }
.btabs button { position: relative; line-height: 14px; }
.mdi { flex: 1; min-width: 0; display: flex; flex-direction: column; }
.view { width: 100%; flex: 1; min-height: 0; }
.cube { font: 700 6px "Liberation Sans", sans-serif; fill: #333; }
.ax { font: 7px "Liberation Sans", sans-serif; fill: #222; }
.mditabs { height: 20px; flex: none; display: flex; gap: 10px; padding-left: 5px; }
.mtab { height: 16px; display: flex; align-items: center; gap: 2px; padding: 0 4px 0 2px; background: #f4f4f4; }
.mtab.cur { background: #fcfcfc; padding-right: 8px; }
.mtab > svg { width: 11px; height: 11px; }
.x { width: 9px; height: 9px; margin-left: 1px; background: #b8b8b8; border: 1px solid #999; box-sizing: border-box; display: grid; place-items: center; }
.x svg { width: 7px; height: 7px; stroke: #fff; stroke-width: 1.4; }
.x.red { background: #d4553c; border-color: #a83420; }
.report { flex: none; }
.log { height: 48px; position: relative; background: #fff; border-bottom: 1px solid #888; overflow: hidden; display: flex; align-items: flex-end; border-right: 11px solid #f2f2f2; }
pre { margin: 0; padding-left: 3px; font-family: "DejaVu Sans Condensed", "Noto Sans", sans-serif; font-size: 8px; line-height: 11px; }
.e { color: #a3142c; }
.w { color: #dcaa50; }
.thumb { position: absolute; right: -6px; top: 23px; width: 1px; height: 12px; background: #666; }
.status { height: 15px; flex: none; display: flex; align-items: center; padding: 2px 18px 0 4px; box-sizing: border-box; }
.navmode { margin-left: auto; display: flex; align-items: center; gap: 2px; }
.navmode svg { width: 8px; height: 10px; fill: none; stroke: #222; }
.tri { margin-left: 3px; }
.coords { margin-left: 10px; }
</style>
